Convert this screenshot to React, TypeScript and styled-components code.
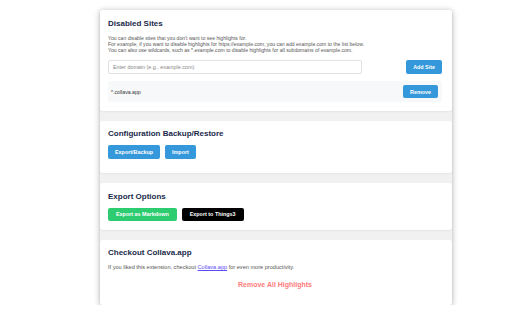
import React, { useState } from "react";
import styled, { createGlobalStyle, css } from "styled-components";

const color = {
  navy: "#1b2a4a",
  text: "#555",
  blue: "#3498db",
  green: "#2ecc71",
  black: "#000",
  gap: "#f1f1f1",
  row: "#f7f8fa",
  red: "#ff7b7b",
  link: "#5a4cf5",
};

type Variant = "blue" | "green" | "black";

const variantBg: Record<Variant, string> = {
  blue: color.blue,
  green: color.green,
  black: color.black,
};

export default function App() {
  const [domain, setDomain] = useState("");
  const [sites, setSites] = useState<string[]>(["*.collava.app"]);

  const addSite = () => {
    if (!domain.trim()) return;
    setSites([...sites, domain.trim()]);
    setDomain("");
  };

  return (
    <>
      <GlobalStyle />
      <Page>
        <Card>
          <Title>Disabled Sites</Title>
          <Desc>
            You can disable sites that you don't want to see highlights for.
            <br />
            For example, if you want to disable highlights for https://example.com, you can add
            example.com to the list below.
            <br />
            You can also use wildcards, such as *.example.com to disable highlights for all
            subdomains of example.com.
          </Desc>
          <AddRow>
            <DomainInput
              placeholder="Enter domain (e.g., example.com)"
              value={domain}
              onChange={(e) => setDomain(e.target.value)}
            />
            <Button $variant="blue" onClick={addSite}>
              Add Site
            </Button>
          </AddRow>
          <SiteList>
            {sites.map((site) => (
              <SiteItem key={site}>
                <span>{site}</span>
                <SmallButton
                  $variant="blue"
                  onClick={() => setSites(sites.filter((s) => s !== site))}
                >
                  Remove
                </SmallButton>
              </SiteItem>
            ))}
          </SiteList>
        </Card>

        <Card $pb={14}>
          <Title>Configuration Backup/Restore</Title>
          <ButtonRow>
            <Button $variant="blue">Export/Backup</Button>
            <Button $variant="blue">Import</Button>
          </ButtonRow>
        </Card>

        <Card>
          <Title>Export Options</Title>
          <ButtonRow>
            <ExportButton $variant="green">Export as Markdown</ExportButton>
            <ExportButton $variant="black">Export to Things3</ExportButton>
          </ButtonRow>
        </Card>

        <Card>
          <Title>Checkout Collava.app</Title>
          <Note>
            If you liked this extension, checkout <LinkText href="#">Collava.app</LinkText> for
            even more productivity.
          </Note>
          <DangerButton>Remove All Highlights</DangerButton>
        </Card>
      </Page>
    </>
  );
}

const GlobalStyle = createGlobalStyle`
  body {
    margin: 0;
    background: #fff;
    font-family: "Liberation Sans", Arial, sans-serif;
  }
`;

const Page = styled.div`
  width: 352px;
  margin: 10px 0 0 100px;
  display: flex;
  flex-direction: column;
  gap: 10px;
  background: ${color.gap};
  box-shadow: 0 1px 6px rgba(0, 0, 0, 0.32);
`;

const Card = styled.section<{ $pb?: number }>`
  background: #fff;
  border-radius: 3px;
  padding: 8.5px 10px ${(p) => p.$pb ?? 8.5}px 8px;
  box-shadow: 0 1px 2px rgba(0, 0, 0, 0.05);
`;

const Title = styled.h2`
  margin: 0 0 6px;
  font-size: 8px;
  line-height: 10px;
  font-weight: 600;
  color: ${color.navy};
`;

const Desc = styled.p`
  margin: 0;
  font-size: 5.1px;
  line-height: 6.4px;
  color: ${color.text};
`;

const Note = styled(Desc)`
  font-size: 5.6px;
`;

const AddRow = styled.div`
  display: flex;
  justify-content: space-between;
  align-items: center;
  margin-top: 6.5px;
`;

const DomainInput = styled.input`
  width: 76%;
  height: 14px;
  box-sizing: border-box;
  border: 1px solid #e2e2e2;
  border-radius: 2px;
  padding: 0 4px;
  font-family: inherit;
  font-size: 5.4px;
  color: #333;
  outline: none;

  &::placeholder {
    color: #888;
  }
`;

const Button = styled.button<{ $variant: Variant }>`
  border: none;
  border-radius: 2px;
  padding: 4px 7px;
  font-family: inherit;
  font-size: 5.4px;
  line-height: 6px;
  font-weight: 600;
  color: #fff;
  cursor: pointer;
  ${(p) => css`
    background: ${variantBg[p.$variant]};
  `}
`;

const SmallButton = styled(Button)`
  padding: 3.5px 7px;
`;

const ExportButton = styled(Button)`
  padding: 3.7px 8px;
`;

const SiteList = styled.ul`
  margin: 7px 0 0;
  padding: 0;
  list-style: none;
`;

const SiteItem = styled.li`
  display: flex;
  justify-content: space-between;
  align-items: center;
  background: ${color.row};
  border-radius: 2px;
  padding: 4px 4px 4px 3px;
  font-size: 5.2px;
  color: #333;
`;

const ButtonRow = styled.div`
  display: flex;
  gap: 5px;
`;

const LinkText = styled.a`
  color: ${color.link};
  text-decoration: underline;
`;

const DangerButton = styled.button`
  display: block;
  margin: 5px auto 4px;
  padding: 4px;
  border: none;
  background: none;
  font-family: inherit;
  font-size: 7px;
  line-height: 9px;
  font-weight: 700;
  color: ${color.red};
  cursor: pointer;
`;
